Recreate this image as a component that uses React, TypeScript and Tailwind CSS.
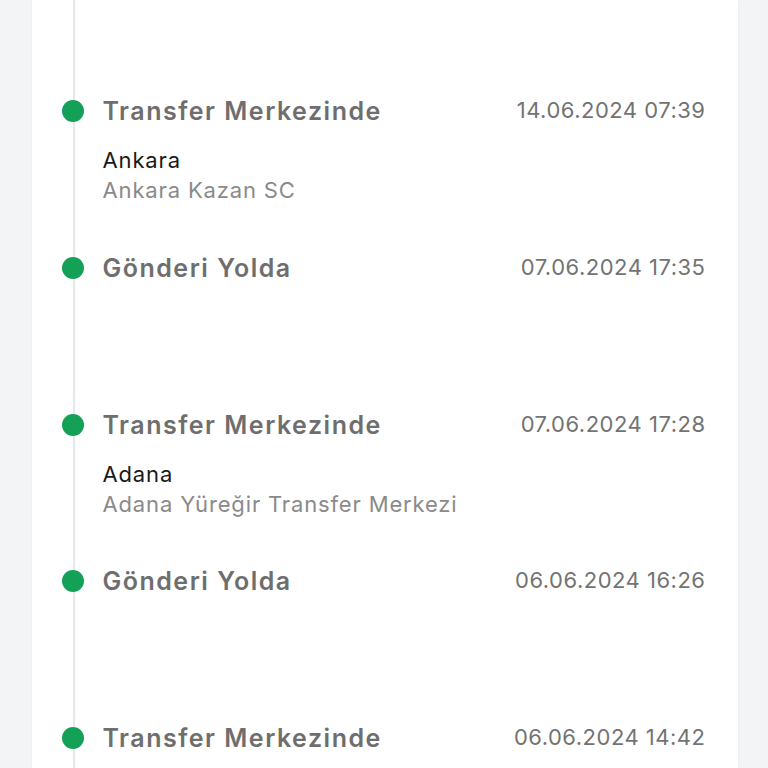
import React from "react";

type Item = { title: string; date: string; city?: string; place?: string };

const items: Item[] = [
  { title: "Transfer Merkezinde", date: "14.06.2024 07:39", city: "Ankara", place: "Ankara Kazan SC" },
  { title: "Gönderi Yolda", date: "07.06.2024 17:35" },
  { title: "Transfer Merkezinde", date: "07.06.2024 17:28", city: "Adana", place: "Adana Yüreğir Transfer Merkezi" },
  { title: "Gönderi Yolda", date: "06.06.2024 16:26" },
  { title: "Transfer Merkezinde", date: "06.06.2024 14:42" },
];

export default function App() {
  return (
    <div
      className="w-[768px] h-[768px] overflow-hidden bg-[#f3f4f6] flex justify-center"
      style={{ fontFamily: "Inter, 'Noto Sans', sans-serif" }}
    >
      <div className="w-[706px] ml-[1px] h-full bg-white relative shadow-[0_0_2px_rgba(0,0,0,0.06)]">
        <div className="absolute left-[41px] top-0 bottom-0 w-[2px] bg-[#e5e7eb]" />
        <div className="pt-[95px] flex flex-col">
          {items.map((it, i) => (
            <div key={i} className="h-[156.75px] flex relative">
              <div className="w-[71px] flex justify-center pl-[11px] pr-0">
                <div className="mt-[5px] w-[22px] h-[22px] rounded-full bg-[#15a058] relative" />
              </div>
              <div className="flex-1 pr-[32px]">
                <div className="flex items-start justify-between">
                  <div className="text-[25px] leading-[32px] font-semibold tracking-[1.5px] text-[#6e6e6e]">{it.title}</div>
                  <div className="text-[22px] leading-[30px] tracking-[0.5px] text-[#737373]">{it.date}</div>
                </div>
                {it.city && (
                  <div className="mt-[18px]">
                    <div className="text-[22px] leading-[30px] tracking-[0.85px] text-[#1a1a1a]">{it.city}</div>
                    <div className="text-[22px] leading-[30px] tracking-[0.85px] text-[#8a8a8a]">{it.place}</div>
                  </div>
                )}
              </div>
            </div>
          ))}
        </div>
      </div>
    </div>
  );
}
